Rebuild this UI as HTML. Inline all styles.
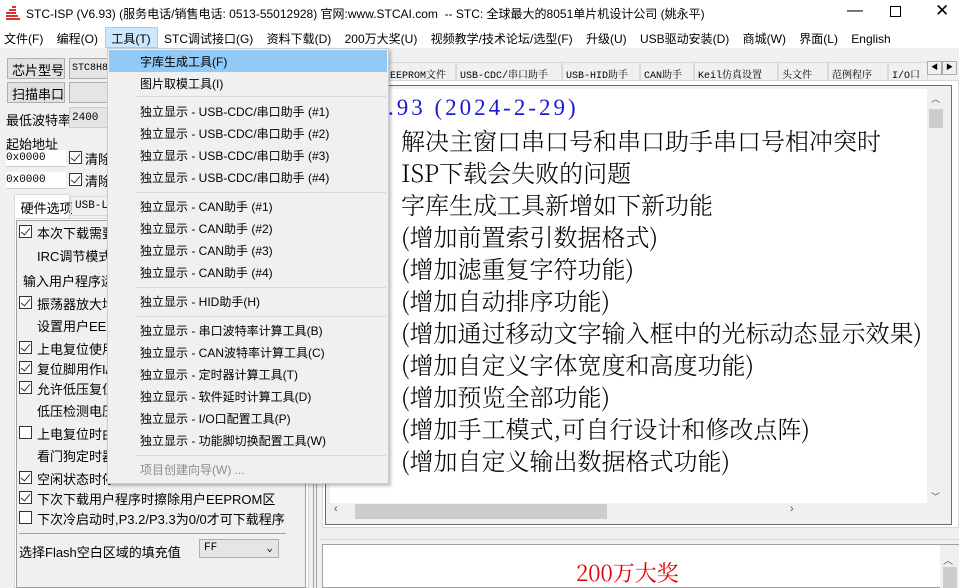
<!DOCTYPE html>
<html><head><meta charset="utf-8"><style>
*{margin:0;padding:0;box-sizing:border-box}
body{width:959px;height:588px;overflow:hidden;background:#f0f0f0;font-family:"Liberation Sans","Noto Sans CJK SC",sans-serif;font-size:12px;color:#000;position:relative}
.a{position:absolute;white-space:nowrap}
.mono{font-family:"Liberation Mono","Noto Serif CJK SC",monospace;font-size:11px}
.cb{position:absolute;width:13px;height:13px;border:1px solid #333;background:#fff}
.cb.c::after{content:"";position:absolute;left:3px;top:0px;width:4px;height:8px;border:solid #333;border-width:0 1.5px 1.5px 0;transform:rotate(40deg)}
.btn{position:absolute;border:1px solid #adadad;background:#e1e1e1}
.tab{position:absolute;top:62px;height:19px;border:1px solid #d9d9d9;border-bottom:none;background:#f0f0f0;padding:3px 3px;font-size:10px;overflow:hidden}
.mi{position:absolute;left:140px;font-size:12px}
.sep{position:absolute;left:136px;width:250px;height:1px;background:#d7d7d7}
.ln{position:absolute;left:401px;font-size:24px;font-family:"Noto Serif CJK SC",serif;white-space:nowrap;font-weight:300}
</style></head><body>
<div class="a" style="left:0;top:0;width:959px;height:27px;background:#fff"></div>
<svg class="a" style="left:5px;top:5px" width="16" height="16"><path d="M1 14h14M1 11h12M1 8h10M4 5h7M7 2h4" stroke="#d33" stroke-width="2"/></svg>
<div class="a" style="left:26px;top:5px;font-size:12px">STC-ISP (V6.93) (服务电话/销售电话: 0513-55012928) 官网:www.STCAI.com&nbsp; -- STC: 全球最大的8051单片机设计公司 (姚永平)</div>
<div class="a" style="left:847px;top:2px;font-size:16px">—</div>
<div class="a" style="left:890px;top:6px;width:11px;height:11px;border:1px solid #000"></div>
<div class="a" style="left:935px;top:1px;font-size:17px">✕</div>
<div class="a" style="left:0;top:27px;width:959px;height:21px;background:#fff"></div>
<div class="a" style="left:105px;top:27px;width:53px;height:21px;background:#cce8ff;border:1px solid #99d1ff"></div>
<div class="a" style="left:4px;top:30px">文件(F)&nbsp;&nbsp;&nbsp; 编程(O)&nbsp;&nbsp;&nbsp; 工具(T)&nbsp;&nbsp;&nbsp; STC调试接口(G)&nbsp;&nbsp;&nbsp; 资料下载(D)&nbsp;&nbsp;&nbsp; 200万大奖(U)&nbsp;&nbsp;&nbsp; 视频教学/技术论坛/选型(F)&nbsp;&nbsp;&nbsp; 升级(U)&nbsp;&nbsp;&nbsp; USB驱动安装(D)&nbsp;&nbsp;&nbsp; 商城(W)&nbsp;&nbsp;&nbsp; 界面(L)&nbsp;&nbsp;&nbsp; English</div>
<div class="btn" style="left:7px;top:58px;width:58px;height:21px"></div><div class="a" style="left:12px;top:60px;font-size:13px">芯片型号</div>
<div class="a mono" style="left:69px;top:58px;width:50px;height:21px;border:1px solid #adadad;background:#e5e5e5;padding:4px 2px;font-size:10px">STC8H8</div>
<div class="btn" style="left:7px;top:82px;width:58px;height:21px"></div><div class="a" style="left:12px;top:84px;font-size:13px">扫描串口</div>
<div class="a" style="left:69px;top:82px;width:50px;height:21px;border:1px solid #adadad;background:#e5e5e5"></div>
<div class="a" style="left:6px;top:110px;font-size:13px">最低波特率</div>
<div class="a mono" style="left:69px;top:107px;width:50px;height:21px;border:1px solid #ccc;background:#e5e5e5;padding:4px 2px">2400</div>
<div class="a" style="left:6px;top:134px;font-size:13px">起始地址</div>
<div class="a mono" style="left:6px;top:150px;width:60px;height:17px;background:#fff;border-bottom:1px solid #ccc;padding-top:2px">0x0000</div>
<div class="cb c" style="left:69px;top:151px"></div><div class="a" style="left:85px;top:149px;font-size:13px">清除</div>
<div class="a mono" style="left:6px;top:172px;width:60px;height:17px;background:#fff;border-bottom:1px solid #ccc;padding-top:2px">0x0000</div>
<div class="cb c" style="left:69px;top:173px"></div><div class="a" style="left:85px;top:171px;font-size:13px">清除</div>
<div class="a" style="left:14px;top:194px;width:56px;height:24px;background:#fff;border:1px solid #d9d9d9;border-bottom:none;padding:3px 0 0 2px;font-size:13px">&nbsp;硬件选项</div>
<div class="a mono" style="left:70px;top:196px;width:40px;height:20px;border:1px solid #d9d9d9;padding:3px 4px">USB-L</div>
<div class="a" style="left:14px;top:218px;width:295px;height:370px;background:#fff;border:1px solid #d9d9d9"></div>
<div class="a" style="left:16px;top:220px;width:290px;height:368px;border:1px solid #a0a0a0;background:#f0f0f0"></div>
<div class="cb c" style="left:19px;top:225px"></div><div class="a" style="left:37px;top:223px;font-size:13px">本次下载需要</div>
<div class="a" style="left:37px;top:246px;font-size:13px">IRC调节模式</div>
<div class="a" style="left:23px;top:271px;font-size:13px">输入用户程序运</div>
<div class="cb c" style="left:19px;top:296px"></div><div class="a" style="left:37px;top:294px;font-size:13px">振荡器放大增</div>
<div class="a" style="left:37px;top:316px;font-size:13px">设置用户EEPR</div>
<div class="cb c" style="left:19px;top:341px"></div><div class="a" style="left:37px;top:339px;font-size:13px">上电复位使用</div>
<div class="cb c" style="left:19px;top:361px"></div><div class="a" style="left:37px;top:359px;font-size:13px">复位脚用作I/</div>
<div class="cb c" style="left:19px;top:381px"></div><div class="a" style="left:37px;top:379px;font-size:13px">允许低压复位</div>
<div class="a" style="left:37px;top:401px;font-size:13px">低压检测电压</div>
<div class="cb" style="left:19px;top:426px"></div><div class="a" style="left:37px;top:424px;font-size:13px">上电复位时由</div>
<div class="a" style="left:37px;top:446px;font-size:13px">看门狗定时器</div>
<div class="cb c" style="left:19px;top:471px"></div><div class="a" style="left:37px;top:469px;font-size:13px">空闲状态时停</div>
<div class="cb c" style="left:19px;top:491px"></div><div class="a" style="left:37px;top:489px;font-size:13px">下次下载用户程序时擦除用户EEPROM区</div>
<div class="cb" style="left:19px;top:511px"></div><div class="a" style="left:37px;top:509px;font-size:13px">下次冷启动时,P3.2/P3.3为0/0才可下载程序</div>
<div class="a" style="left:19px;top:533px;width:267px;height:1px;background:#a0a0a0"></div>
<div class="a" style="left:19px;top:542px;font-size:13px">选择Flash空白区域的填充值</div>
<div class="a mono" style="left:199px;top:539px;width:80px;height:19px;border:1px solid #adadad;background:#e5e5e5;padding:2px 4px">FF<span style="position:absolute;right:5px;top:1px">⌄</span></div>
<div class="a" style="left:313px;top:80px;width:1px;height:508px;background:#a0a0a0"></div>
<div class="a" style="left:316px;top:80px;width:1px;height:508px;background:#a0a0a0"></div>
<div class="tab mono" style="left:386px;width:70px">EEPROM文件</div>
<div class="tab mono" style="left:456px;width:106px">USB-CDC/串口助手</div>
<div class="tab mono" style="left:562px;width:78px">USB-HID助手</div>
<div class="tab mono" style="left:640px;width:54px">CAN助手</div>
<div class="tab mono" style="left:694px;width:84px">Keil仿真设置</div>
<div class="tab mono" style="left:778px;width:50px">头文件</div>
<div class="tab mono" style="left:828px;width:60px">范例程序</div>
<div class="tab mono" style="left:888px;width:40px">I/O口配</div>
<div class="a" style="left:927px;top:61px;width:15px;height:14px;border:1px solid #aaa;background:#f0f0f0;font-size:7px;text-align:center;line-height:12px">◀</div>
<div class="a" style="left:942px;top:61px;width:15px;height:14px;border:1px solid #aaa;background:#f0f0f0;font-size:7px;text-align:center;line-height:12px">▶</div>
<div class="a" style="left:322px;top:80px;width:637px;height:448px;background:#fff;border:1px solid #d9d9d9"></div>
<div class="a" style="left:325px;top:85px;width:627px;height:440px;border:1px solid #6d6d6d;background:#f0f0f0"></div>
<div class="a" style="left:330px;top:89px;width:614px;height:415px;background:#fff"></div>
<div class="a" style="left:927px;top:89px;width:17px;height:415px;background:#f0f0f0"></div>
<div class="a" style="left:929px;top:109px;width:14px;height:19px;background:#cdcdcd"></div>
<div class="a" style="left:931px;top:92px;font-size:9px;color:#555">︿</div>
<div class="a" style="left:931px;top:490px;font-size:9px;color:#555">﹀</div>
<div class="a" style="left:330px;top:503px;width:614px;height:17px;background:#f0f0f0"></div>
<div class="a" style="left:355px;top:504px;width:252px;height:15px;background:#cdcdcd"></div>
<div class="a" style="left:334px;top:503px;font-size:11px;color:#555">‹</div>
<div class="a" style="left:790px;top:503px;font-size:11px;color:#555">›</div>
<div class="a" style="left:388px;top:95px;font-size:23px;color:#1a1ad0;font-family:'Liberation Serif',serif;letter-spacing:3px">.93 (2024-2-29)</div>
<div class="ln" style="top:122px">解决主窗口串口号和串口助手串口号相冲突时</div>
<div class="ln" style="top:154px">ISP下载会失败的问题</div>
<div class="ln" style="top:186px">字库生成工具新增如下新功能</div>
<div class="ln" style="top:218px">(增加前置索引数据格式)</div>
<div class="ln" style="top:250px">(增加滤重复字符功能)</div>
<div class="ln" style="top:282px">(增加自动排序功能)</div>
<div class="ln" style="top:314px">(增加通过移动文字输入框中的光标动态显示效果)</div>
<div class="ln" style="top:346px">(增加自定义字体宽度和高度功能)</div>
<div class="ln" style="top:378px">(增加预览全部功能)</div>
<div class="ln" style="top:410px">(增加手工模式,可自行设计和修改点阵)</div>
<div class="ln" style="top:442px">(增加自定义输出数据格式功能)</div>
<div class="a" style="left:320px;top:539px;width:639px;height:1px;background:#bcdce8"></div>
<div class="a" style="left:322px;top:544px;width:637px;height:44px;background:#fff;border:1px solid #a0a0a0"></div>
<div class="a" style="left:940px;top:545px;width:19px;height:43px;background:#f0f0f0"></div>
<div class="a" style="left:943px;top:552px;font-size:10px;color:#555">︿</div>
<div class="a" style="left:943px;top:567px;width:14px;height:21px;background:#cdcdcd"></div>
<div class="a" style="left:576px;top:557px;font-size:22px;color:#e00000;font-family:'Noto Serif CJK SC',serif">200万大奖</div>
<div class="a" style="left:107px;top:48px;width:282px;height:436px;background:#f0f0f0;border:1px solid #ccc;box-shadow:2px 2px 3px rgba(0,0,0,.25)"></div>
<div class="a" style="left:109px;top:50px;width:278px;height:22px;background:#91c9f7"></div>
<div class="mi" style="top:53px">字库生成工具(F)</div>
<div class="mi" style="top:75px">图片取模工具(I)</div>
<div class="sep" style="top:96px"></div>
<div class="mi" style="top:103px">独立显示 - USB-CDC/串口助手 (#1)</div>
<div class="mi" style="top:125px">独立显示 - USB-CDC/串口助手 (#2)</div>
<div class="mi" style="top:147px">独立显示 - USB-CDC/串口助手 (#3)</div>
<div class="mi" style="top:169px">独立显示 - USB-CDC/串口助手 (#4)</div>
<div class="sep" style="top:192px"></div>
<div class="mi" style="top:198px">独立显示 - CAN助手 (#1)</div>
<div class="mi" style="top:220px">独立显示 - CAN助手 (#2)</div>
<div class="mi" style="top:242px">独立显示 - CAN助手 (#3)</div>
<div class="mi" style="top:264px">独立显示 - CAN助手 (#4)</div>
<div class="sep" style="top:287px"></div>
<div class="mi" style="top:293px">独立显示 - HID助手(H)</div>
<div class="sep" style="top:316px"></div>
<div class="mi" style="top:322px">独立显示 - 串口波特率计算工具(B)</div>
<div class="mi" style="top:344px">独立显示 - CAN波特率计算工具(C)</div>
<div class="mi" style="top:366px">独立显示 - 定时器计算工具(T)</div>
<div class="mi" style="top:388px">独立显示 - 软件延时计算工具(D)</div>
<div class="mi" style="top:410px">独立显示 - I/O口配置工具(P)</div>
<div class="mi" style="top:432px">独立显示 - 功能脚切换配置工具(W)</div>
<div class="sep" style="top:455px"></div>
<div class="mi" style="top:461px;color:#8c8c8c">项目创建向导(W) ...</div>
</body></html>
